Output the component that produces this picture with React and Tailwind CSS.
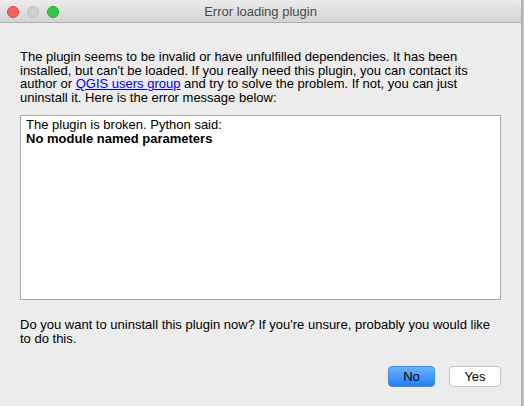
export default function App() {
  const font = { fontFamily: '"Liberation Sans", Arial, sans-serif' };
  return (
    <div className="w-[524px] h-[406px] bg-[#f0f0f0] flex" style={font}>
      <div className="w-[521px] h-[406px] bg-[#ececec] flex flex-col rounded-tr-[5px] rounded-tl-[5px] overflow-hidden">
        <div className="h-[23px] shrink-0 bg-gradient-to-b from-[#ebebeb] to-[#d4d4d4] border-b border-[#b1b1b1] relative flex items-center justify-center">
          <div className="absolute left-[7px] top-[6px] flex gap-[8px]">
            <div className="w-[12px] h-[12px] rounded-full bg-[#fc605c] border border-[#e0443e]" />
            <div className="w-[12px] h-[12px] rounded-full bg-[#cfcfcf] border border-[#c2c2c2]" />
            <div className="w-[12px] h-[12px] rounded-full bg-[#34c84a] border border-[#24a83a]" />
          </div>
          <span className="text-[13px] text-[#4a4a4a] leading-none">Error loading plugin</span>
        </div>
        <div className="flex flex-col px-[20px] pt-[27px] text-[13px] leading-[13.5px] text-black">
          <p>
            The plugin seems to be invalid or have unfulfilled dependencies. It has been
            <br />
            installed, but can't be loaded. If you really need this plugin, you can contact its
            <br />
            author or <span className="text-[#0000ee] underline">QGIS users group</span> and try to solve the problem. If not, you can just
            <br />
            uninstall it. Here is the error message below:
          </p>
          <div className="mt-[11px] w-[481px] h-[185px] bg-white border border-[#a9a9a9] pl-[5px] pt-[2px]">
            <div>The plugin is broken. Python said:</div>
            <div className="font-bold">No module named parameters</div>
          </div>
          <p className="mt-[18px]">
            Do you want to uninstall this plugin now? If you're unsure, probably you would like
            <br />
            to do this.
          </p>
          <div className="mt-[21px] flex justify-end gap-[14px] w-[481px]">
            <button className="w-[47px] h-[21px] rounded-[4px] bg-gradient-to-b from-[#6cb3fa] to-[#1c7ffb] border border-[#3d8cf0] text-[13px] text-black leading-none">
              No
            </button>
            <button className="w-[52px] h-[21px] rounded-[4px] bg-white border border-[#c4c4c4] text-[13px] text-black leading-none">
              Yes
            </button>
          </div>
        </div>
      </div>
      <div className="w-[3px] h-[406px] bg-gradient-to-r from-[#a6a6a6] to-[#cdcdcd]" />
    </div>
  );
}
